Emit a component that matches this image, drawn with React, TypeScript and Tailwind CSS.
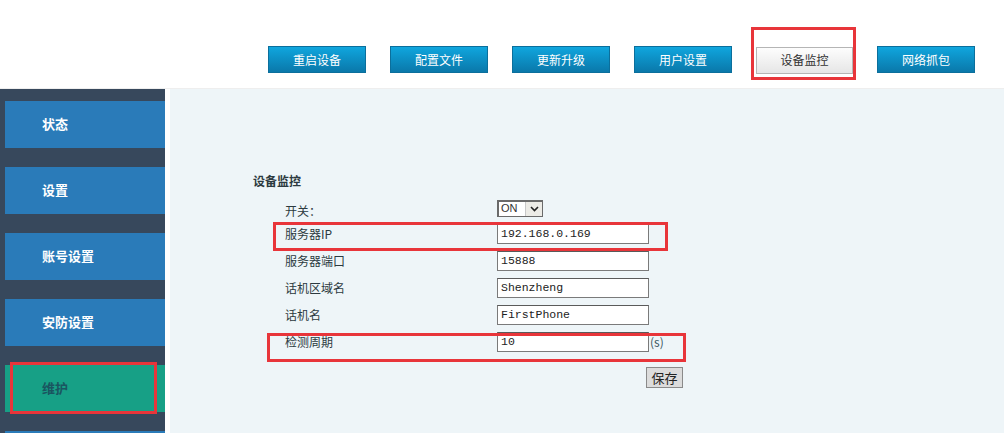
const TOP_BUTTONS = ["重启设备", "配置文件", "更新升级", "用户设置", "设备监控", "网络抓包"];
const MENU = ["状态", "设置", "账号设置", "安防设置", "维护", ""];

const FONT = { fontFamily: '"Noto Sans CJK SC", "Noto Sans", sans-serif' };
const MONO = { fontFamily: '"Liberation Mono", "Noto Sans CJK SC", monospace' };

function TopButton({ label }: { label: string }) {
  const active = label === "设备监控";
  if (active) {
    return (
      <div className="relative">
        <button className="w-[97px] h-[27px] border border-[#b5b5b5] bg-gradient-to-b from-[#fdfdfd] to-[#e6e6e6] text-[12px] text-[#333]">
          {label}
        </button>
        {/* red annotation */}
        <div className="absolute left-[-5px] top-[-19px] w-[105px] h-[53px] border-[3px] border-[#e8353a]" />
      </div>
    );
  }
  return (
    <button className="w-[98px] h-[27px] border border-[#0b6f9c] bg-gradient-to-b from-[#10a6de] to-[#0a78aa] text-[12px] text-white">
      {label}
    </button>
  );
}

function Field({ label, value, boxed }: { label: string; value: string; boxed?: "ip" | "period" }) {
  return (
    <div className="relative flex items-center h-[20px] mb-[7px]">
      <span className="w-[212px] text-[12px] text-[#2c3a40]">{label}</span>
      <div
        className="w-[152px] h-[20px] bg-white border border-[#7a7a7a] border-t-[#5a5a5a] pl-[3px] text-[11.5px] leading-[18px] text-[#222]"
        style={MONO}
      >
        {value}
      </div>
      {boxed === "period" && <span className="ml-[1px] text-[12px] text-[#3a5560]">(s)</span>}
      {boxed === "ip" && (
        <div className="absolute left-[-12px] top-[-2px] w-[395px] h-[29px] border-[3px] border-[#e8353a]" />
      )}
      {boxed === "period" && (
        <div className="absolute left-[-18px] top-[1px] w-[419px] h-[29px] border-[3px] border-[#e8353a]" />
      )}
    </div>
  );
}

export default function App() {
  return (
    <div className="w-[1004px] h-[433px] overflow-hidden bg-white flex flex-col" style={FONT}>
      {/* Header buttons */}
      <div className="h-[89px] shrink-0 border-b border-[#eeeeee] flex items-start pl-[268px] pt-[46px] gap-[24px]">
        {TOP_BUTTONS.map((b) => (
          <TopButton key={b} label={b} />
        ))}
      </div>

      <div className="flex flex-1 min-h-0">
        {/* Sidebar */}
        <div className="w-[165px] shrink-0 bg-[#37485c] pt-[12px] flex flex-col gap-[19px]">
          {MENU.map((m, i) => {
            const current = m === "维护";
            return (
              <div
                key={i}
                className={`relative ml-[5px] h-[47px] shrink-0 flex items-center pl-[37px] pb-[2px] text-[13px] font-bold ${
                  current ? "bg-[#17a086] text-[#1a5560]" : "bg-[#2a7bb9] text-white"
                }`}
              >
                {m}
                {current && (
                  <div className="absolute left-[5px] top-[-3px] w-[147px] h-[52px] border-[3px] border-[#e8353a]" />
                )}
              </div>
            );
          })}
        </div>
        <div className="w-[5px] shrink-0 bg-white" />

        {/* Content */}
        <div className="flex-1 bg-[#eef5f8] pl-[83px] pt-[84px]">
          <div className="text-[12px] font-bold text-[#2c3a40] leading-[16px]">设备监控</div>
          <div className="ml-[32px] mt-[11px]">
            <div className="flex items-center h-[17px] mb-[7px]">
              <span className="w-[212px] text-[12px] text-[#2c3a40] pt-[4px]">开关：</span>
              <div className="flex h-[17px] w-[46px] border border-[#6a6a6a] border-l-2 border-t-2 bg-white">
                <span className="flex-1 pl-[2px] text-[11px] leading-[13px] text-[#333]" style={{ fontFamily: '"Liberation Sans", sans-serif' }}>
                  ON
                </span>
                <span className="w-[17px] flex items-center justify-center bg-[#ecebe6] border-l border-[#c8c8c8]">
                  <svg width="9" height="6" viewBox="0 0 9 6">
                    <path d="M1 1 L4.5 4.5 L8 1" fill="none" stroke="#222" strokeWidth="1.6" />
                  </svg>
                </span>
              </div>
            </div>
            <Field label="服务器IP" value="192.168.0.169" boxed="ip" />
            <Field label="服务器端口" value="15888" />
            <Field label="话机区域名" value="Shenzheng" />
            <Field label="话机名" value="FirstPhone" />
            <Field label="检测周期" value="10" boxed="period" />
            <div className="flex pl-[361px] pt-[8px]">
              <button className="w-[37px] h-[21px] bg-[#dcdcdc] border border-[#8a8a8a] text-[13px] text-[#222] leading-[18px]">
                保存
              </button>
            </div>
          </div>
        </div>
      </div>
    </div>
  );
}
